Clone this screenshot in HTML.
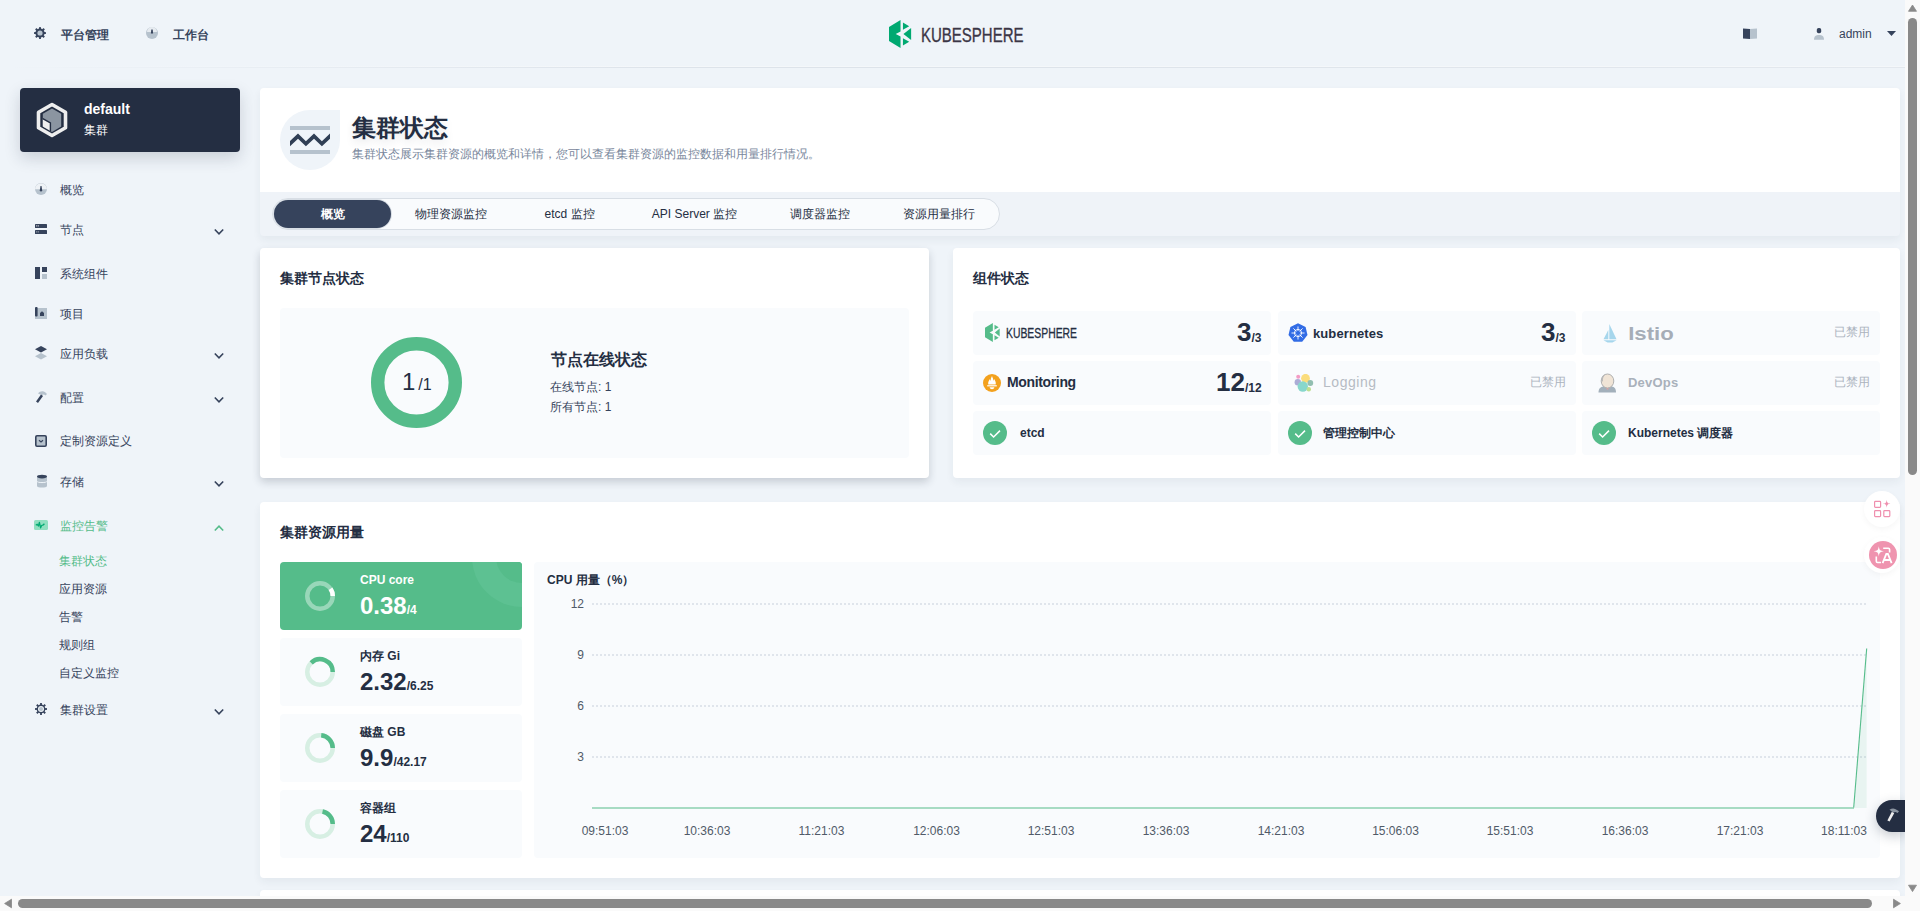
<!DOCTYPE html>
<html><head><meta charset="utf-8">
<style>
*{box-sizing:border-box;margin:0;padding:0}
html,body{width:1920px;height:911px;overflow:hidden;background:#eff4f9}
body{font-family:"Liberation Sans",sans-serif;color:#242e42;font-size:12px;position:relative}
.a{position:absolute;white-space:nowrap}
.b{font-weight:bold}
svg{display:block}
.nav{position:absolute;left:60px;font-size:12px;color:#36435c;line-height:16px}
.ni{position:absolute;left:32px;width:16px;height:16px}
.chev{position:absolute;left:213px;width:12px;height:12px}
.card{position:absolute;background:#fff;border-radius:4px}
.panel{position:absolute;background:#f9fbfd;border-radius:4px}
.tab{position:absolute;top:200px;height:28px;line-height:28px;text-align:center;font-size:12px;color:#242e42}
.item{position:absolute;width:298px;height:44px;background:#f9fbfd;border-radius:4px}
.res{position:absolute;left:280px;width:242px;height:68px;background:#f9fbfd;border-radius:4px;overflow:hidden}
.ylab{position:absolute;width:40px;text-align:right;left:544px;font-size:12px;color:#505a68;line-height:14px}
.xlab{position:absolute;top:824px;font-size:12px;color:#505a68;line-height:14px;width:80px;text-align:center}
.grid{position:absolute;left:592px;width:1274px;height:2px;background:repeating-linear-gradient(90deg,#e0e5ec 0 2px,transparent 2px 4px)}
</style></head>
<body>

<!-- header -->
<div class="a" style="left:0;top:66px;width:1905px;height:1px;background:linear-gradient(90deg,rgba(245,248,251,0) 0,#f4f7fa 35%,#f4f7fa 100%)"></div>
<div class="a" style="left:0;top:67px;width:1905px;height:1px;background:linear-gradient(90deg,rgba(220,226,233,0) 0,#dde3ea 35%,#dde3ea 55%,#e3e8ee 100%)"></div>

<svg class="a" style="left:34px;top:27px" width="12" height="12" viewBox="0 0 12 12">
 <g fill="#36435c"><circle cx="6" cy="6" r="4.6"/>
 <g id="tooth"><rect x="5" y="0" width="2" height="2.2" rx=".4"/></g>
 <use href="#tooth" transform="rotate(45 6 6)"/><use href="#tooth" transform="rotate(90 6 6)"/><use href="#tooth" transform="rotate(135 6 6)"/>
 <use href="#tooth" transform="rotate(180 6 6)"/><use href="#tooth" transform="rotate(225 6 6)"/><use href="#tooth" transform="rotate(270 6 6)"/><use href="#tooth" transform="rotate(315 6 6)"/></g>
 <circle cx="6" cy="6" r="2.6" fill="#b6c2cd"/>
</svg>
<div class="a b" style="left:61px;top:28px;font-size:12px;line-height:14px;color:#36435c">平台管理</div>
<svg class="a" style="left:146px;top:27px" width="12" height="12" viewBox="0 0 12 12">
 <circle cx="6" cy="6" r="6" fill="#b6c2cd"/><path d="M1 5A5 5 0 0 1 11 5" fill="#e6ebf0"/><circle cx="6" cy="6" r="6" fill="none"/>
 <path d="M5.3 2.5h1.4l.4 4h-2.2z" fill="#36435c"/>
</svg>
<div class="a b" style="left:173px;top:28px;font-size:12px;line-height:14px;color:#36435c">工作台</div>

<!-- logo -->
<svg class="a" style="left:889px;top:20px" width="25" height="28" viewBox="0 0 26 28" preserveAspectRatio="none">
 <path d="M12 0 L0 7 V21 L12 28 V16.5 L7 14 L12 11.5 Z" fill="#00a971"/>
 <path d="M14.5 2.5 L21 6.3 L14.5 9.8 Z" fill="#00a971"/>
 <path d="M23 8 V20 L15 14 Z" fill="#00a971"/>
 <path d="M14.5 18.2 L21 21.7 L14.5 25.5 Z" fill="#00a971"/>
</svg>
<svg class="a" style="left:920px;top:22px" width="106" height="24" viewBox="0 0 106 24"><text x="1" y="19.5" font-family="Liberation Sans" font-size="20.5" fill="#3b3646" stroke="#3b3646" stroke-width="0.35" textLength="102.5" lengthAdjust="spacingAndGlyphs">KUBESPHERE</text></svg>
<!-- right header -->
<svg class="a" style="left:1743px;top:28px" width="14" height="11" viewBox="0 0 14 11">
 <path d="M0 0.5 L7 1 V11 L0 10.5Z" fill="#36435c"/><path d="M7 1 L14 0.5 V10.5 L7 11Z" fill="#b6c2cd"/>
</svg>
<svg class="a" style="left:1813px;top:27px" width="12" height="14" viewBox="0 0 12 14">
 <rect x="3.8" y="1" width="4.4" height="5.2" rx="1.8" fill="#36435c"/><path d="M1 12.8 C1 9 3 8 6 8 C9 8 11 9 11 12.8Z" fill="#b6c2cd"/>
</svg>
<div class="a" style="left:1839px;top:27px;font-size:12px;line-height:14px;color:#36435c">admin</div>
<svg class="a" style="left:1887px;top:31px" width="9" height="6" viewBox="0 0 9 6"><path d="M0 0H9L4.5 5Z" fill="#36435c"/></svg>

<!-- sidebar cluster card -->
<div class="a" style="left:20px;top:88px;width:220px;height:64px;background:#242e42;border-radius:4px;box-shadow:0 6px 16px rgba(36,46,66,.18)"></div>
<svg class="a" style="left:36px;top:102px" width="32" height="36" viewBox="0 0 32 36">
 <path d="M16 2.5 L29.5 10.2 V25.8 L16 33.5 L2.5 25.8 V10.2Z" fill="none" stroke="#eeeeee" stroke-width="3.6" stroke-linejoin="round"/>
 <path d="M16 6.4 L25.2 11.7 V24.6 L16 29.9 L6.8 24.6 V11.7Z" fill="#8b95a1"/>
 <path d="M6.8 17 L14.2 21.3 V28.8 L6.8 24.6Z" fill="#eeeeee"/><path d="M6.8 16.6 L14.4 21 V29" fill="none" stroke="#242e42" stroke-width="1.4"/>
</svg>
<div class="a b" style="left:84px;top:101px;font-size:14px;line-height:16px;color:#fff">default</div>
<div class="a" style="left:84px;top:123px;font-size:12px;line-height:14px;color:#fff">集群</div>

<!-- nav -->
<svg class="a" style="left:35px;top:183px" width="12" height="12" viewBox="0 0 12 12"><circle cx="6" cy="6" r="6" fill="#b6c2cd"/><path d="M0 6.3A6 6 0 0 1 12 6.3Z" fill="#eef2f6"/><path d="M5.5 3h1l.7 4.2a1.2 1.2 0 0 1 -2.4 0z" fill="#36435c"/></svg>
<div class="nav" style="top:182px">概览</div>
<svg class="a" style="left:35px;top:223px" width="12" height="12" viewBox="0 0 12 12"><rect x="0" y="1" width="12" height="4" rx=".6" fill="#36435c"/><rect x="0" y="7" width="12" height="4" rx=".6" fill="#36435c"/><rect x="1.2" y="2.4" width="1" height="1" fill="#fff"/><rect x="2.8" y="2.4" width="1" height="1" fill="#fff"/><rect x="1.2" y="8.4" width="1" height="1" fill="#b6c2cd"/><rect x="2.8" y="8.4" width="1" height="1" fill="#b6c2cd"/></svg>
<div class="nav" style="top:222px">节点</div>
<svg class="a" style="left:213px;top:228px" width="12" height="8" viewBox="0 0 12 8"><path d="M1.8 1.5 L6 5.8 L10.2 1.5" fill="none" stroke="#36435c" stroke-width="1.6"/></svg>
<svg class="a" style="left:35px;top:267px" width="12" height="12" viewBox="0 0 12 12"><rect x="0" y="0" width="5" height="12" fill="#36435c"/><rect x="7" y="0" width="5" height="5" fill="#36435c"/><rect x="7" y="7" width="5" height="5" fill="#b6c2cd"/></svg>
<div class="nav" style="top:266px">系统组件</div>
<svg class="a" style="left:35px;top:307px" width="12" height="12" viewBox="0 0 12 12"><rect x="0" y="1" width="12" height="11" fill="#b6c2cd"/><rect x="0" y="0" width="2.6" height="9.5" rx="1" fill="#36435c"/><path d="M5 9 V6 L7 4.3 L9 6 V9Z" fill="#36435c"/></svg>
<div class="nav" style="top:306px">项目</div>
<svg class="a" style="left:35px;top:346px" width="12" height="14" viewBox="0 0 12 14"><path d="M6 7 L12 10.3 L6 13.5 L0 10.3Z" fill="#b6c2cd"/><path d="M6 0 L12 3.3 L6 6.5 L0 3.3Z" fill="#36435c"/></svg>
<div class="nav" style="top:346px">应用负载</div>
<svg class="a" style="left:213px;top:352px" width="12" height="8" viewBox="0 0 12 8"><path d="M1.8 1.5 L6 5.8 L10.2 1.5" fill="none" stroke="#36435c" stroke-width="1.6"/></svg>
<svg class="a" style="left:35px;top:390px" width="12" height="14" viewBox="0 0 12 14"><path d="M3 3.5 C5 1 8 0.5 10.5 2.5 L12 4 L10.5 5.5 L9 4.5 L6.5 5 Z" fill="#b6c2cd"/><path d="M6 4.5 L8 6 L3 13 L1 11.5Z" fill="#36435c"/></svg>
<div class="nav" style="top:390px">配置</div>
<svg class="a" style="left:213px;top:396px" width="12" height="8" viewBox="0 0 12 8"><path d="M1.8 1.5 L6 5.8 L10.2 1.5" fill="none" stroke="#36435c" stroke-width="1.6"/></svg>
<svg class="a" style="left:35px;top:435px" width="12" height="12" viewBox="0 0 12 12"><rect x=".8" y=".8" width="10.4" height="10.4" rx="1.2" fill="#b6c2cd" stroke="#36435c" stroke-width="1.6"/><path d="M4 5.3 L6 7 L8 5.3" fill="none" stroke="#36435c" stroke-width="1.2"/></svg>
<div class="nav" style="top:433px">定制资源定义</div>
<svg class="a" style="left:36px;top:474px" width="12" height="14" viewBox="0 0 12 14"><path d="M1 3 V12 C1 14 11 14 11 12 V3Z" fill="#b6c2cd"/><ellipse cx="6" cy="2.6" rx="5" ry="1.8" fill="#36435c"/><path d="M1 7.3 C1 9 11 9 11 7.3" fill="none" stroke="#eff4f9" stroke-width="1"/></svg>
<div class="nav" style="top:474px">存储</div>
<svg class="a" style="left:213px;top:480px" width="12" height="8" viewBox="0 0 12 8"><path d="M1.8 1.5 L6 5.8 L10.2 1.5" fill="none" stroke="#36435c" stroke-width="1.6"/></svg>
<svg class="a" style="left:34px;top:520px" width="14" height="10" viewBox="0 0 14 10"><rect x="0" y="0" width="14" height="10" rx="1.5" fill="#90dfc0"/><path d="M1.8 5.3 L3.2 4.3 L4.4 6 L5.4 2.4 L6.6 7.8 L7.6 5.5 L9.4 4.8 L10.4 3.8" fill="none" stroke="#00aa72" stroke-width="1.3" stroke-linejoin="round"/></svg>
<div class="nav" style="top:518px;color:#55bc8a">监控告警</div>
<svg class="a" style="left:213px;top:524px" width="12" height="8" viewBox="0 0 12 8"><path d="M1.8 6.5 L6 2.2 L10.2 6.5" fill="none" stroke="#55bc8a" stroke-width="1.6"/></svg>
<div class="nav" style="left:59px;top:553px;color:#55bc8a">集群状态</div>
<div class="nav" style="left:59px;top:581px;color:#36435c">应用资源</div>
<div class="nav" style="left:59px;top:609px;color:#36435c">告警</div>
<div class="nav" style="left:59px;top:637px;color:#36435c">规则组</div>
<div class="nav" style="left:59px;top:665px;color:#36435c">自定义监控</div>
<svg class="a" style="left:35px;top:703px" width="12" height="12" viewBox="0 0 12 12"><g fill="#36435c"><circle cx="6" cy="6" r="4.4"/>
 <rect x="5.1" y="0" width="1.8" height="2.4"/><rect x="5.1" y="0" width="1.8" height="2.4" transform="rotate(45 6 6)"/><rect x="5.1" y="0" width="1.8" height="2.4" transform="rotate(90 6 6)"/><rect x="5.1" y="0" width="1.8" height="2.4" transform="rotate(135 6 6)"/>
 <rect x="5.1" y="0" width="1.8" height="2.4" transform="rotate(180 6 6)"/><rect x="5.1" y="0" width="1.8" height="2.4" transform="rotate(225 6 6)"/><rect x="5.1" y="0" width="1.8" height="2.4" transform="rotate(270 6 6)"/><rect x="5.1" y="0" width="1.8" height="2.4" transform="rotate(315 6 6)"/></g>
 <circle cx="6" cy="6" r="3" fill="#eff4f9"/><circle cx="6" cy="6" r="2" fill="#b6c2cd"/></svg>
<div class="nav" style="top:702px">集群设置</div>
<svg class="a" style="left:213px;top:708px" width="12" height="8" viewBox="0 0 12 8"><path d="M1.8 1.5 L6 5.8 L10.2 1.5" fill="none" stroke="#36435c" stroke-width="1.6"/></svg>

<!-- banner -->
<div class="card" style="left:260px;top:88px;width:1640px;height:148px;background:#eff3f8;overflow:hidden;box-shadow:0 4px 8px rgba(36,46,66,.06)">
  <div style="position:absolute;left:0;top:0;width:1640px;height:104px;background:#fff"></div>
</div>
<div class="a" style="left:280px;top:110px;width:60px;height:60px;background:#eff4f9;border-radius:30px 0 30px 30px"></div>
<svg class="a" style="left:290px;top:126px" width="40" height="28" viewBox="0 0 40 28">
 <rect x="0" y="0" width="40" height="4" fill="#b6c2cd"/>
 <rect x="0" y="24" width="40" height="4" fill="#b6c2cd"/>
 <path d="M0 15.1 L8 7.6 L15.9 15.3 L24 7.6 L31.9 15.3 L40 7.6 V12.7 L31.9 20.3 L24 12.7 L15.9 20.3 L8 12.7 L0 20.3Z" fill="#303f55"/>
</svg>
<div class="a b" style="left:352px;top:114px;font-size:24px;line-height:28px;color:#242e42;text-shadow:0 4px 8px rgba(36,46,66,.1)">集群状态</div>
<div class="a" style="left:352px;top:147px;font-size:12px;line-height:14px;color:#79879c">集群状态展示集群资源的概览和详情，您可以查看集群资源的监控数据和用量排行情况。</div>

<!-- tabs -->
<div class="a" style="left:272px;top:198px;width:728px;height:32px;border:1px solid #d8dee5;border-radius:16px;background:#f9fbfd"></div>
<div class="a" style="left:274px;top:200px;width:117px;height:28px;background:#36435c;border-radius:14px;box-shadow:0 0 0 1px #d8dee5"></div>
<div class="tab b" style="left:274px;width:117px;color:#fff">概览</div>
<div class="tab" style="left:391px;width:119px">物理资源监控</div>
<div class="tab" style="left:510px;width:119px">etcd 监控</div>
<div class="tab" style="left:629px;width:131px">API Server 监控</div>
<div class="tab" style="left:760px;width:120px">调度器监控</div>
<div class="tab" style="left:880px;width:117px">资源用量排行</div>

<!-- node status card -->
<div class="card" style="left:260px;top:248px;width:669px;height:230px;box-shadow:0 4px 8px rgba(36,46,66,.2)"></div>
<div class="a b" style="left:280px;top:270px;font-size:14px;line-height:16px">集群节点状态</div>
<div class="panel" style="left:280px;top:308px;width:629px;height:150px"></div>
<svg class="a" style="left:371px;top:337px" width="91" height="91" viewBox="0 0 91 91"><circle cx="45.5" cy="45.5" r="38.8" fill="none" stroke="#55bc8a" stroke-width="13.4"/></svg>
<div class="a" style="left:402px;top:368px;font-size:24px;line-height:28px;color:#242e42">1<span style="font-size:16px;margin-left:3px">/1</span></div>
<div class="a b" style="left:551px;top:350px;font-size:16px;line-height:20px">节点在线状态</div>
<div class="a" style="left:550px;top:380px;font-size:12px;line-height:14px;color:#36435c">在线节点: 1</div>
<div class="a" style="left:550px;top:400px;font-size:12px;line-height:14px;color:#36435c">所有节点: 1</div>

<!-- component status card -->
<div class="card" style="left:953px;top:248px;width:947px;height:230px;box-shadow:0 4px 8px rgba(36,46,66,.06)"></div>
<div class="a b" style="left:973px;top:270px;font-size:14px;line-height:16px">组件状态</div>


<div class="item" style="left:973px;top:311px"></div>
<div class="item" style="left:1278px;top:311px"></div>
<div class="item" style="left:1582px;top:311px"></div>
<div class="item" style="left:973px;top:361px"></div>
<div class="item" style="left:1278px;top:361px"></div>
<div class="item" style="left:1582px;top:361px"></div>
<div class="item" style="left:973px;top:411px"></div>
<div class="item" style="left:1278px;top:411px"></div>
<div class="item" style="left:1582px;top:411px"></div>
<svg class="a" style="left:985px;top:323px" width="17" height="19" viewBox="0 0 26 28" preserveAspectRatio="none">
 <path d="M12 0 L0 7 V21 L12 28 V16.5 L7 14 L12 11.5 Z" fill="#55bc8a"/>
 <path d="M14.5 2.5 L21 6.3 L14.5 9.8 Z" fill="#55bc8a"/>
 <path d="M22.5 8 V20 L15 14 Z" fill="#55bc8a"/>
 <path d="M14.5 18.2 L21 21.7 L14.5 25.5 Z" fill="#55bc8a"/></svg>
<svg class="a" style="left:1005px;top:323px" width="74" height="20" viewBox="0 0 74 20"><text x="1" y="15" font-family="Liberation Sans" font-size="14.5" fill="#242e42" stroke="#242e42" stroke-width="0.3" textLength="71" lengthAdjust="spacingAndGlyphs">KUBESPHERE</text></svg>
<div class="a b" style="left:1237px;top:317px;font-size:26px;line-height:30px">3<span style="font-size:12px;position:relative;top:1px">/3</span></div>
<svg class="a" style="left:1288px;top:323px" width="20" height="20" viewBox="0 0 20 20">
 <path d="M10 0.3 L17.6 3.9 L19.5 12.1 L14.2 18.7 H5.8 L0.5 12.1 L2.4 3.9Z" fill="#326ce5"/>
 <g stroke="#fff" stroke-width="0.9" fill="none"><circle cx="10" cy="10" r="3.6"/>
 <path d="M10 3.5V16.5M3.5 10H16.5M5.4 5.4L14.6 14.6M14.6 5.4L5.4 14.6"/></g>
 <circle cx="10" cy="10" r="2.2" fill="#326ce5"/>
</svg>
<div class="a b" style="left:1313px;top:326px;font-size:13px;line-height:16px;color:#242e42;letter-spacing:0.1px">kubernetes</div>
<div class="a b" style="left:1541px;top:317px;font-size:26px;line-height:30px">3<span style="font-size:12px;position:relative;top:1px">/3</span></div>
<svg class="a" style="left:1603px;top:324px" width="14" height="19" viewBox="0 0 14 19">
 <path d="M6.3 0 V15.2 L13.5 15.2Z" fill="#a6d6ec"/><path d="M5.3 6 V15.2 H0.5Z" fill="#a6d6ec"/><path d="M0.5 16.2 H13.5 L9.5 18.6 H4.5Z" fill="#a6d6ec"/>
</svg>
<svg class="a" style="left:1627px;top:322px" width="50" height="22" viewBox="0 0 50 22"><text x="1.2" y="17.6" font-family="Liberation Sans" font-weight="bold" font-size="19" fill="#a6adb7" textLength="45.5" lengthAdjust="spacingAndGlyphs">Istio</text></svg>
<div class="a" style="left:1834px;top:325px;font-size:12px;line-height:14px;color:#abb3bd">已禁用</div>

<svg class="a" style="left:983px;top:374px" width="18" height="18" viewBox="0 0 18 18">
 <circle cx="9" cy="9" r="9" fill="#f3a11d"/>
 <path d="M5.3 10.5 C4.8 8 6 6.5 6.8 5 C7 6 7.2 6.4 7.6 6.8 C7.6 5 8.2 3.5 9 2 C9.4 3.5 10.6 5 10.4 6.8 C10.8 6.3 11 5.8 11.2 5 C12 6.5 13.2 8 12.7 10.5Z" fill="#fff"/>
 <rect x="4.2" y="11.2" width="9.6" height="1.2" fill="#fff"/><path d="M6.6 13.3 H11.4 C11 14.7 10.2 15.2 9 15.2 C7.8 15.2 7 14.7 6.6 13.3Z" fill="#fff"/>
</svg>
<div class="a b" style="left:1007px;top:374px;font-size:14px;line-height:17px;color:#242e42;letter-spacing:-0.35px">Monitoring</div>
<div class="a b" style="left:1216px;top:367px;font-size:26px;line-height:30px">12<span style="font-size:12px;position:relative;top:1px">/12</span></div>
<svg class="a" style="left:1294px;top:374px" width="20" height="19" viewBox="0 0 20 19">
 <g opacity=".55"><circle cx="4.2" cy="2.8" r="2" fill="#ef5098"/><circle cx="11.5" cy="4.3" r="4.4" fill="#fec514"/><circle cx="3.8" cy="8.2" r="3.2" fill="#6c6cb7"/><circle cx="16.3" cy="9" r="2.9" fill="#3e8e73"/><circle cx="8.8" cy="12.5" r="5.2" fill="#2cbba5"/><circle cx="14.8" cy="15.3" r="2.2" fill="#8fc93a"/></g>
</svg>
<div class="a" style="left:1323px;top:374px;font-size:14px;line-height:17px;color:#b6bcc4;letter-spacing:0.55px">Logging</div>
<div class="a" style="left:1530px;top:375px;font-size:12px;line-height:14px;color:#abb3bd">已禁用</div>
<svg class="a" style="left:1598px;top:373px" width="19" height="20" viewBox="0 0 19 20">
 <path d="M0.5 19.5 C0.5 15 3 14 5 13.5 L14 13.5 C16 14 18 15 18 19.5Z" fill="#a3b0bb"/>
 <path d="M7 14 L9.5 17 L12 14Z" fill="#e0a0a0"/>
 <ellipse cx="9.5" cy="8" rx="6.3" ry="7" fill="#f0e4d6" stroke="#b0b0b0" stroke-width="1"/>
 <path d="M3.5 7 C3.5 3 5.5 1.3 8 1.2 C5.5 2.5 4.5 5 5 9Z" fill="#b8b8b8"/>
</svg>
<div class="a b" style="left:1628px;top:374px;font-size:13px;line-height:17px;color:#a9b1bb;letter-spacing:0.2px">DevOps</div>
<div class="a" style="left:1834px;top:375px;font-size:12px;line-height:14px;color:#abb3bd">已禁用</div>

<svg class="a" style="left:983px;top:421px" width="24" height="24" viewBox="0 0 24 24"><circle cx="12" cy="12" r="12" fill="#55bc8a"/><path d="M7.2 12.6 L10.6 16 L17 9.6" fill="none" stroke="#fff" stroke-width="1.5"/></svg>
<div class="a b" style="left:1020px;top:426px;font-size:12px;line-height:14px">etcd</div>
<svg class="a" style="left:1288px;top:421px" width="24" height="24" viewBox="0 0 24 24"><circle cx="12" cy="12" r="12" fill="#55bc8a"/><path d="M7.2 12.6 L10.6 16 L17 9.6" fill="none" stroke="#fff" stroke-width="1.5"/></svg>
<div class="a b" style="left:1323px;top:426px;font-size:12px;line-height:14px">管理控制中心</div>
<svg class="a" style="left:1592px;top:421px" width="24" height="24" viewBox="0 0 24 24"><circle cx="12" cy="12" r="12" fill="#55bc8a"/><path d="M7.2 12.6 L10.6 16 L17 9.6" fill="none" stroke="#fff" stroke-width="1.5"/></svg>
<div class="a b" style="left:1628px;top:426px;font-size:12px;line-height:14px">Kubernetes 调度器</div>

<!-- resource usage -->
<div class="card" style="left:260px;top:502px;width:1640px;height:376px;box-shadow:0 4px 8px rgba(36,46,66,.06)"></div>
<div class="card" style="left:260px;top:890px;width:1640px;height:100px;box-shadow:0 4px 8px rgba(36,46,66,.06)"></div>
<div class="a b" style="left:280px;top:524px;font-size:14px;line-height:16px">集群资源用量</div>
<div class="res" style="top:562px;background:#55bc8a">
  <div style="position:absolute;left:192px;top:-55px;width:100px;height:100px;border-radius:50%;background:#5dc192"></div>
  <div style="position:absolute;left:216px;top:-31px;width:52px;height:52px;border-radius:50%;background:#55bc8a"></div>
</div>
<svg class="a" style="left:304px;top:580px" width="32" height="32" viewBox="304 580 32 32"><circle cx="320" cy="596" r="12.75" fill="none" stroke="rgba(255,255,255,.4)" stroke-width="4.5"/><path d="M330.55 588.83 A12.75 12.75 0 0 1 332.75 596.00" fill="none" stroke="#fff" stroke-width="4.5"/></svg>
<div class="a b" style="left:360px;top:573px;font-size:12px;line-height:14px;color:#fff">CPU core</div>
<div class="a b" style="left:360px;top:594px;font-size:24px;line-height:24px;color:#fff">0.38<span style="font-size:12px">/4</span></div>
<div class="res" style="top:638px"></div>
<svg class="a" style="left:304px;top:656px" width="32" height="32" viewBox="304 656 32 32"><circle cx="320" cy="672" r="12.75" fill="none" stroke="#d7efe3" stroke-width="4.5"/><path d="M311.20 662.77 A12.75 12.75 0 0 1 332.75 672.00" fill="none" stroke="#55bc8a" stroke-width="4.5"/></svg>
<div class="a b" style="left:360px;top:649px;font-size:12px;line-height:14px">内存 Gi</div>
<div class="a b" style="left:360px;top:670px;font-size:24px;line-height:24px">2.32<span style="font-size:12px">/6.25</span></div>
<div class="res" style="top:714px"></div>
<svg class="a" style="left:304px;top:732px" width="32" height="32" viewBox="304 732 32 32"><circle cx="320" cy="748" r="12.75" fill="none" stroke="#d7efe3" stroke-width="4.5"/><path d="M321.22 735.31 A12.75 12.75 0 0 1 332.75 748.00" fill="none" stroke="#55bc8a" stroke-width="4.5"/></svg>
<div class="a b" style="left:360px;top:725px;font-size:12px;line-height:14px">磁盘 GB</div>
<div class="a b" style="left:360px;top:746px;font-size:24px;line-height:24px">9.9<span style="font-size:12px">/42.17</span></div>
<div class="res" style="top:790px"></div>
<svg class="a" style="left:304px;top:808px" width="32" height="32" viewBox="304 808 32 32"><circle cx="320" cy="824" r="12.75" fill="none" stroke="#d7efe3" stroke-width="4.5"/><path d="M322.53 811.50 A12.75 12.75 0 0 1 332.75 824.00" fill="none" stroke="#55bc8a" stroke-width="4.5"/></svg>
<div class="a b" style="left:360px;top:801px;font-size:12px;line-height:14px">容器组</div>
<div class="a b" style="left:360px;top:822px;font-size:24px;line-height:24px">24<span style="font-size:12px">/110</span></div>

<!-- chart -->
<div class="panel" style="left:534px;top:562px;width:1346px;height:296px"></div>
<div class="a b" style="left:547px;top:573px;font-size:12px;line-height:14px">CPU 用量（%）</div>
<div class="grid" style="top:603px"></div><div class="ylab" style="top:597px">12</div>
<div class="grid" style="top:654px"></div><div class="ylab" style="top:648px">9</div>
<div class="grid" style="top:705px"></div><div class="ylab" style="top:699px">6</div>
<div class="grid" style="top:756px"></div><div class="ylab" style="top:750px">3</div>
<div class="xlab" style="left:565px">09:51:03</div>
<div class="xlab" style="left:667px">10:36:03</div>
<div class="xlab" style="left:781.5px">11:21:03</div>
<div class="xlab" style="left:896.5px">12:06:03</div>
<div class="xlab" style="left:1011px">12:51:03</div>
<div class="xlab" style="left:1126px">13:36:03</div>
<div class="xlab" style="left:1241px">14:21:03</div>
<div class="xlab" style="left:1355.5px">15:06:03</div>
<div class="xlab" style="left:1470px">15:51:03</div>
<div class="xlab" style="left:1585px">16:36:03</div>
<div class="xlab" style="left:1700px">17:21:03</div>
<div class="xlab" style="left:1804px">18:11:03</div>
<svg class="a" style="left:534px;top:562px" width="1346" height="296" viewBox="534 562 1346 296">
 <path d="M1853.7 808 L1866.7 648.5 V808Z" fill="rgba(85,188,138,.1)"/>
 <path d="M1853.7 807.5 L1866.7 648.5" fill="none" stroke="#55bc8a" stroke-width="1.1"/>
 <rect x="592" y="807" width="1262" height="2" fill="rgba(85,188,138,.5)"/>
</svg>


<!-- floating buttons -->
<div class="a" style="left:1864px;top:491px;width:36px;height:36px;border-radius:50%;background:#fff;box-shadow:0 2px 6px rgba(0,0,0,.04)"></div>
<svg class="a" style="left:1873px;top:499px" width="19" height="19" viewBox="0 0 19 19">
 <g fill="none" stroke="#ef8fae" stroke-width="1.2"><rect x="1.6" y="2.4" width="6" height="6" rx=".8"/><rect x="1.6" y="11.6" width="6" height="6" rx=".8"/><rect x="10.8" y="11.6" width="6" height="6" rx=".8"/></g>
 <path d="M13.7 0.8 C14.1 3.9 14.7 4.5 17.4 4.8 C14.7 5.1 14.1 5.7 13.7 8.8 C13.3 5.7 12.7 5.1 10 4.8 C12.7 4.5 13.3 3.9 13.7 0.8Z" fill="#ef8fae"/>
</svg>
<div class="a" style="left:1864px;top:537px;width:36px;height:36px;border-radius:50%;background:#fff;box-shadow:0 2px 6px rgba(0,0,0,.04)"></div>
<svg class="a" style="left:1869px;top:541px" width="28" height="28" viewBox="0 0 28 28">
 <circle cx="14" cy="14" r="14" fill="#ef94af"/>
 <path d="M9.8 5.2 C10.4 9 11 9.7 15 10.3 C11 10.9 10.4 11.6 9.8 15.4 C9.2 11.6 8.6 10.9 4.6 10.3 C8.6 9.7 9.2 9 9.8 5.2Z" fill="#fff"/>
 <path d="M14.2 7.3 H19.4 Q20.6 7.3 20.6 8.5 V11.5" fill="none" stroke="#fff" stroke-width="1.6"/>
 <path d="M7.3 15.5 V20.3 Q7.3 21.5 8.5 21.5 H12" fill="none" stroke="#fff" stroke-width="1.6"/>
 <path d="M13.6 22.2 L17.3 13 H18.9 L22.6 22.2 M15 19 H21.2" fill="none" stroke="#fff" stroke-width="1.8"/>
</svg>
<div class="a" style="left:1876px;top:800px;width:29px;height:32px;border-radius:16px 0 0 16px;background:#242e42;box-shadow:0 4px 12px rgba(36,46,66,.25)"></div>
<svg class="a" style="left:1882px;top:806px" width="20" height="20" viewBox="0 0 20 20">
 <path d="M7.5 3.8 C10 2 12.5 2 15 4 L17 5.2 L15.6 7 L13.6 6 L11.2 6.6Z" fill="#8b95a1"/>
 <path d="M9.8 5.8 L12.2 7.2 L7.6 15.6 L5.4 14.4Z" fill="#eeeeee"/>
</svg>

<!-- scrollbars -->
<div class="a" style="left:1905px;top:0;width:15px;height:911px;background:#fafafa"></div>
<div class="a" style="left:0;top:896px;width:1920px;height:15px;background:#fafafa"></div>
<svg class="a" style="left:1905px;top:0" width="15" height="15" viewBox="0 0 15 15"><path d="M3.5 11.3 L7.5 5 L11.5 11.3Z" fill="#898989" stroke="#898989" stroke-width="0.8" stroke-linejoin="round"/></svg>
<div class="a" style="left:1908px;top:18px;width:9px;height:457px;border-radius:4.5px;background:#898989"></div>
<svg class="a" style="left:1905px;top:881px" width="15" height="15" viewBox="0 0 15 15"><path d="M3.5 4.2 L7.5 10.6 L11.5 4.2Z" fill="#898989" stroke="#898989" stroke-width="0.8" stroke-linejoin="round"/></svg>
<svg class="a" style="left:0;top:896px" width="15" height="15" viewBox="0 0 15 15"><path d="M11.5 3.2 L4.6 7.5 L11.5 11.8Z" fill="#898989" stroke="#898989" stroke-width="0.8" stroke-linejoin="round"/></svg>
<div class="a" style="left:18px;top:899px;width:1854px;height:9px;border-radius:4.5px;background:#898989"></div>
<svg class="a" style="left:1890px;top:896px" width="15" height="15" viewBox="0 0 15 15"><path d="M3.5 3.2 L10.4 7.5 L3.5 11.8Z" fill="#898989" stroke="#898989" stroke-width="0.8" stroke-linejoin="round"/></svg>

</body></html>
